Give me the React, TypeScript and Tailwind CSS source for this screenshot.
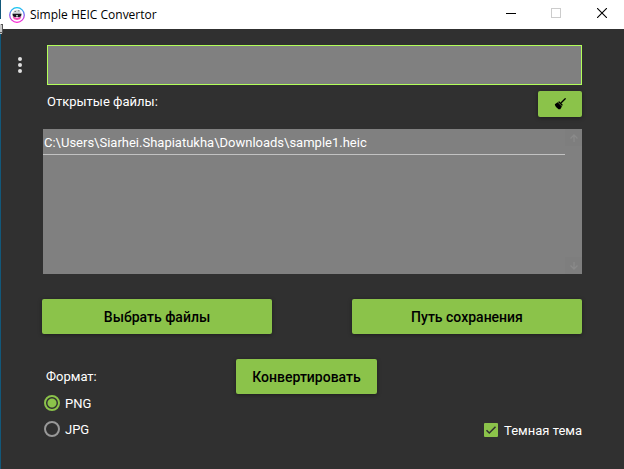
import { useState } from "react";
import type { ReactNode } from "react";

function AppLogo() {
  return (
    <svg viewBox="0 0 16 16" className="size-4" aria-hidden="true">
      <defs>
        <linearGradient id="ring" x1="0" y1="0" x2="0" y2="1">
          <stop offset="0" stopColor="#10c8f0" />
          <stop offset="0.5" stopColor="#8a60f0" />
          <stop offset="1" stopColor="#ff20d0" />
        </linearGradient>
      </defs>
      <circle cx="8" cy="8" r="7.3" fill="#fff" stroke="url(#ring)" strokeWidth="1.3" />
      <path d="M4 5.8 5.3 3.4 8 2.700l2.700.7L12 5.800l1 1.700-.8 2H3.800l-.8-2z" fill="#d3d7dc" />
      <path d="M5.500 4.500h1.500M9 3.800h1.500" stroke="#666" strokeWidth="0.800" />
      <path d="M3.500 6.800h9L12 9.300l-1.500 1H9L8 9.300l-1 1H5.500L4 9.300z" fill="#161620" />
      <path d="M3.500 9.800h1.700l1.300 1h3l1.300-1h1.700L11 12.300 8 13l-3-.7z" fill="#f44cb8" />
      <path d="M7.300 8h1.400v1.300H7.300z" fill="#fff" />
    </svg>
  );
}

function ActionButton({ children }: { children: ReactNode }) {
  return (
    <button
      type="button"
      className="flex h-[35px] w-full items-center justify-center rounded-[2px] bg-[#8bc34a] text-sm font-medium text-black shadow-[0_1px_4px_rgba(0,0,0,0.4)]"
    >
      {children}
    </button>
  );
}

function FormatOption({ value, selected, onSelect }: { value: string; selected: string; onSelect: (v: string) => void }) {
  return (
    <label className="flex h-[26px] items-center gap-[5px]">
      <input
        type="radio"
        name="format"
        value={value}
        checked={selected === value}
        onChange={() => onSelect(value)}
        className="size-4 appearance-none rounded-full border-2 border-[#989898] checked:border-[#8bc34a] checked:bg-[radial-gradient(circle,#8bc34a_4px,transparent_5px)]"
      />
      <span className="pt-0.5">{value}</span>
    </label>
  );
}

export default function App() {
  const [format, setFormat] = useState("PNG");
  const [dark, setDark] = useState(true);
  const [path, setPath] = useState("");

  return (
    <div className="relative flex min-h-screen flex-col border-l border-[#12587a] bg-[#303030] font-[Roboto,sans-serif] text-[13px] leading-4 text-white">
      {/* Edge of the window behind */}
      <svg aria-hidden="true" viewBox="0 0 3 16" className="absolute top-[19px] -left-px h-4 w-[3px]" shapeRendering="crispEdges">
        <path d="M0 0h1v5H0z" fill="#fff" />
        <path d="M0 5h3v9H2v1H0z" fill="#c8c8c8" />
        <path d="M1 5h1v8H0" fill="none" stroke="#555" />
      </svg>
      <header className="flex h-[29px] items-center bg-white pl-2 text-black">
        <AppLogo />
        <h1 className="ml-[5px] flex-1 font-['Open_Sans','Noto_Sans',sans-serif] text-xs">Simple HEIC Convertor</h1>
        <div className="flex h-[26px] self-start">
          <button type="button" aria-label="Minimize" className="flex w-[42px] items-center justify-center">
            <svg viewBox="0 0 10 10" className="size-[10px]" shapeRendering="crispEdges"><path d="M0 5.500h10" stroke="#000" /></svg>
          </button>
          <button type="button" aria-label="Maximize" disabled className="flex w-12 items-center justify-center">
            <svg viewBox="0 0 10 10" className="size-[10px]" shapeRendering="crispEdges"><path d="M.5.5h9v9h-9z" fill="none" stroke="#ccc" /></svg>
          </button>
          <button type="button" aria-label="Close" className="flex w-11 items-center justify-center">
            <svg viewBox="0 0 10 10" className="size-[10px]"><path d="m0 0 10 10M10 0 0 10" stroke="#000" strokeWidth="1.100" /></svg>
          </button>
        </div>
      </header>

      <main className="flex flex-col pr-[42px] pt-4 pl-[41px]">
        <div className="-ml-[27px] flex items-center">
          <button type="button" aria-label="Menu" className="mr-[22px] flex h-6 w-[10px] items-center justify-center">
            <svg viewBox="0 0 4 16" className="h-4 w-1 shrink-0" fill="#e0e0e0">
              <circle cx="2" cy="2" r="2" /><circle cx="2" cy="8" r="2" /><circle cx="2" cy="14" r="2" />
            </svg>
          </button>
          <input
            aria-label="Путь"
            value={path}
            onChange={(e) => setPath(e.target.value)}
            className="h-10 min-w-0 flex-1 border border-[#b2ff59] bg-[#808080] px-2 outline-none"
          />
        </div>

        <div className="mt-[6px] flex h-[26px] items-center justify-between pl-[5px]">
          <h2 className="-mt-1">Открытые файлы:</h2>
          <button type="button" aria-label="Очистить" className="flex h-[26px] w-11 items-center justify-center rounded-[2px] bg-[#8bc34a] shadow-[0_1px_4px_rgba(0,0,0,0.4)]">
            <svg viewBox="0 0 12 12" className="size-3">
              <path d="m11.200.8-4 4" stroke="#000" strokeWidth="1.300" strokeLinecap="round" />
              <path d="m5.200 3.200 3.600 3.600-.8 1.200L4 4z" fill="#000" />
              <path d="M3.600 4.200 7.900 8.500 6.300 11.200H4.500L3.400 10.200 2.500 9.500 1.300 8 .8 6.200z" fill="#000" />
            </svg>
          </button>
        </div>

        <section className="mt-3 ml-px flex h-[145px] bg-[#808080]">
          <ul className="min-w-0 flex-1">
            <li className="h-[26px] truncate border-b border-[#c2c2c2] pt-[6px] pl-px">C:\Users\Siarhei.Shapiatukha\Downloads\sample1.heic</li>
          </ul>
          <div className="flex w-[17px] flex-col justify-between">
            <button type="button" aria-label="Вверх" className="flex h-[17px] items-center justify-center bg-[#7e7e7e]">
              <svg viewBox="0 0 8 8" className="size-2" fill="none" stroke="#8a8a8a" strokeWidth="1.300"><path d="M4 8V1M.5 4.500 4 1l3.500 3.500" /></svg>
            </button>
            <button type="button" aria-label="Вниз" className="flex h-[17px] items-center justify-center bg-[#7e7e7e]">
              <svg viewBox="0 0 8 8" className="size-2" fill="none" stroke="#8a8a8a" strokeWidth="1.300"><path d="M4 0v7M.5 3.500 4 7l3.500-3.500" /></svg>
            </button>
          </div>
        </section>

        <div className="mt-[25px] grid grid-cols-2 gap-20">
          <ActionButton>Выбрать файлы</ActionButton>
          <ActionButton>Путь сохранения</ActionButton>
        </div>

        <div className="mt-[25px] grid grid-cols-[194px_141px_1fr] items-start">
          <fieldset className="pl-[2px]">
            <legend className="h-[31px] pt-[10px] pl-[2px]">Формат:</legend>
            <FormatOption value="PNG" selected={format} onSelect={setFormat} />
            <FormatOption value="JPG" selected={format} onSelect={setFormat} />
          </fieldset>
          <ActionButton>Конвертировать</ActionButton>
          <label className="flex items-center gap-[6px] self-end justify-self-end pb-[3px]">
            <span className="grid">
              <input
                type="checkbox"
                checked={dark}
                onChange={(e) => setDark(e.target.checked)}
                className="peer col-start-1 row-start-1 size-[14px] appearance-none rounded-[1px] border-2 border-[#989898] checked:border-[#8bc34a] checked:bg-[#8bc34a]"
              />
              <svg viewBox="0 0 14 14" className="pointer-events-none col-start-1 row-start-1 hidden size-[14px] peer-checked:block" fill="none" stroke="#303030" strokeWidth="1.500">
                <path d="M2.500 7.200 5.300 10l6.200-6.300" />
              </svg>
            </span>
            <span className="pt-0.5">Темная тема</span>
          </label>
        </div>
      </main>
    </div>
  );
}
